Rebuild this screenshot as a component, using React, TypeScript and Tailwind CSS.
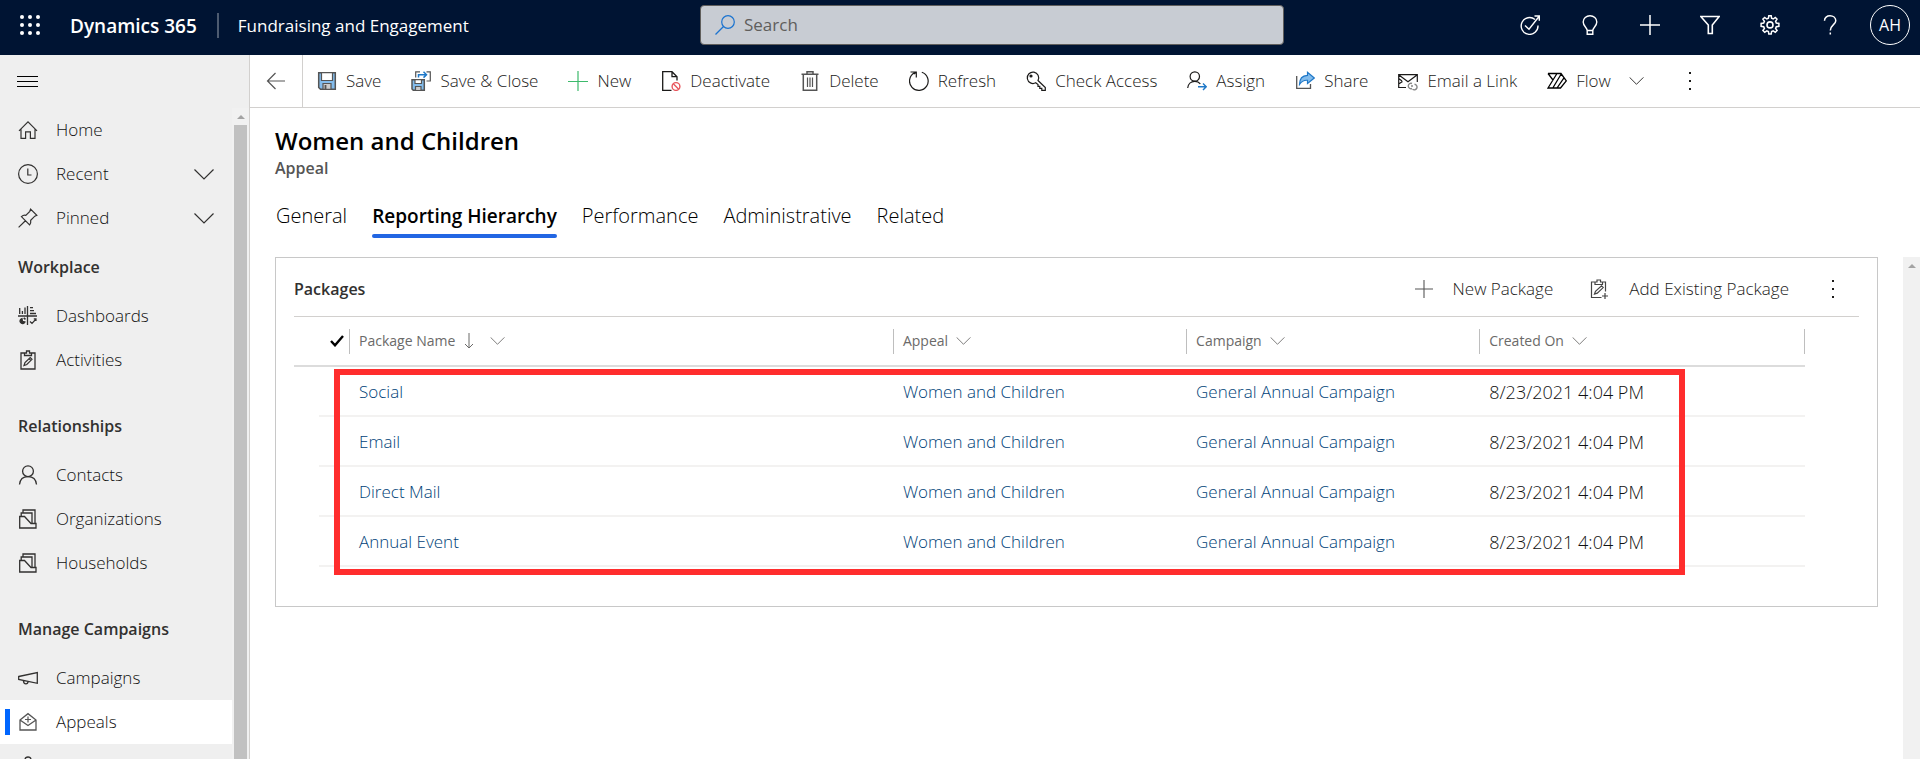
import type { ReactNode } from "react";

function Icon({ children, className = "h-5 w-5" }: { children: ReactNode; className?: string }) {
  return (
    <svg viewBox="0 0 20 20" fill="none" stroke="currentColor" strokeWidth="1.2" className={"shrink-0 " + className} aria-hidden="true">
      {children}
    </svg>
  );
}

function Chevron({ className }: { className: string }) {
  return (
    <svg viewBox="0 0 20 11" fill="none" stroke="currentColor" strokeWidth="1.2" className={"shrink-0 " + className} aria-hidden="true">
      <path d="M.5.5 10 10 19.5.5" />
    </svg>
  );
}

function Dots() {
  return (
    <svg viewBox="0 0 4 18" fill="currentColor" className="h-[18px] w-1" aria-hidden="true">
      <rect x="1" y="0" width="2" height="2" />
      <rect x="1" y="8" width="2" height="2" />
      <rect x="1" y="16" width="2" height="2" />
    </svg>
  );
}

const icons = {
  home: <Icon><path d="M3 9v9.4h4.600v-6.600h4.800v6.600H17V9M1 10.800 10 1.800l9 9" /></Icon>,
  recent: <Icon><circle cx="10" cy="10" r="9.400" /><path d="M9.800 4.500V11H13.500" /></Icon>,
  pinned: <Icon><path d="M12.600 1.200 18.800 7.400 16.800 8.200 12.700 12.300C13 14 12.700 15.400 11.600 16.800L3.400 8.600C4.700 7.400 6.200 7 7.800 7.300L11.800 3.300ZM7.400 12.700.600 19.400" /></Icon>,
  dashboards: (
    <Icon>
      <path d="M0 10h19M9.500 0v19" strokeWidth="1.300" />
      <path d="M1.700 2v6M4.400 5v3M7 1.500V8M12 1.700h3M12 4.700h4M12 7.500h6" strokeWidth="1.300" />
      <path d="M12 15.500 14 17.500 18 13M15.800 12.800H18V15" />
      <path d="M4 12.500A2.600 2.600 0 1 0 7 16L4.500 15.300Z" fill="currentColor" />
      <path d="M5.700 11.800 7.500 13.300" strokeWidth="1.500" />
    </Icon>
  ),
  activities: (
    <Icon>
      <path d="M6.500 3H3v16h14V3h-3.500M6.500 3v2.500h7V3H11.500V1h-3v2Z" strokeWidth="1.300" />
      <path d="M6 15.500 7 12.500 12.200 7.500 14 9.300 8.800 14.500ZM11 8.700 12.800 10.500" />
    </Icon>
  ),
  contacts: <Icon><circle cx="10" cy="6.200" r="5.400" strokeWidth="1.300" /><path d="M1.500 19.500C2 14.500 5.500 11.700 10 11.700S18 14.500 18.500 19.500" strokeWidth="1.300" /></Icon>,
  folder: (
    <Icon>
      <path d="M1.700 19V7.500H6.500L13 14.500H18V19ZM3.200 7V4H14V14M5 3.700V1H17V14" strokeWidth="1.300" />
    </Icon>
  ),
  campaigns: <Icon><path d="M.700 8.500 19.300 4.500V15.300L.700 11.500ZM5.500 12.500V13.500C6 16.800 10 16.500 10 13.500" strokeWidth="1.300" /></Icon>,
  appeals: (
    <Icon className="h-5 w-5 text-[#555]">
      <path d="M2 8 10 1.700 18 8V18H2ZM2 8 10 13.500 18 8" strokeWidth="1.300" />
      <path d="M10 4.500v6M7 7.500h6" />
    </Icon>
  ),
  packages: <Icon><path d="M10 1a3 3 0 0 1 3 3v2H7V4a3 3 0 0 1 3-3ZM3 6h14v13H3Z" strokeWidth="1.300" /></Icon>,
  back: <Icon className="h-5 w-5 text-[#555]"><path d="M9.500 2 1.500 10 9.500 18M1.500 10H19" /></Icon>,
  save: (
    <Icon>
      <path d="M1.700 1.700H18.300V18.300H3.500L1.700 16.500Z" fill="#83bcec" stroke="#555" strokeWidth="1.500" />
      <path d="M4.500 1.700H15.500V9.500H4.500Z" fill="#fff" stroke="#555" />
      <path d="M6 18.300V12.500H14V18.300Z" fill="#ccc" stroke="#555" />
      <path d="M8.500 14V18" stroke="#555" strokeWidth="1.800" />
    </Icon>
  ),
  saveClose: (
    <Icon>
      <path d="M1 8.700H13.300V19.300H2.300L1 18Z" fill="#83bcec" stroke="#555" strokeWidth="1.500" />
      <path d="M4 8.700H10.500V12.500H4Z" fill="#fff" stroke="#555" />
      <path d="M4.500 19V15.500H10V19" fill="#ccc" stroke="#555" />
      <path d="M4.700 6.500V.800H9M15.500.800H19.300V10H15.500" stroke="#555" />
      <path d="M7.500 6.500V3.700H15M12.500.800 15.500 3.700 12.500 6.600" stroke="#1f78c8" strokeWidth="1.500" />
    </Icon>
  ),
  add: <Icon className="h-5 w-5 text-[#3dba6c]"><path d="M10 0v20M0 10.500h20" /></Icon>,
  deactivate: (
    <Icon>
      <path d="M10.500 19.300H1.700V.700H11L16 5.700V9.500M11 .700V5.700H16" strokeWidth="1.300" />
      <g stroke="#e8555c" strokeWidth="1.400"><circle cx="15" cy="15.500" r="3.900" /><path d="M12.300 12.800 17.700 18.200" /></g>
    </Icon>
  ),
  trash: <Icon className="h-5 w-5 text-[#555]"><path d="M1.500 3.300H18.500M3.300 3.300V19.300H16.700V3.300M7 3V.700H13V3" strokeWidth="1.500" /><path d="M7.500 6.500V16M10 6.500V16M12.500 6.500V16" /></Icon>,
  refresh: <Icon><path d="M12.800 1.200A9.300 9.300 0 1 1 5.500 1.800M1.500 1H7.300V6.500M7 1.200 5 3" strokeWidth="1.200" /></Icon>,
  key: (
    <Icon>
      <path d="M12 9.500 19.300 16.500V19.300H15.800V17.300H13.800V15.300H12V13.500L9.700 11.800A5.700 5.700 0 1 1 12 9.500Z" strokeWidth="1.200" />
      <circle cx="5" cy="5" r="1" fill="currentColor" />
    </Icon>
  ),
  assign: (
    <Icon>
      <circle cx="7.800" cy="5.500" r="4.700" strokeWidth="1.200" />
      <path d="M.700 17C1 13 4 10.300 7.800 10.300 10 10.300 12 11.200 13.300 13" strokeWidth="1.200" />
      <path d="M11 15.700H19M16 12.500 19.200 15.700 16 18.900" stroke="#1f78c8" strokeWidth="1.400" />
    </Icon>
  ),
  share: (
    <Icon>
      <path d="M1.700 5V17.300H15.500V13" stroke="#555" strokeWidth="1.300" />
      <path d="M4.500 13.500C4.500 8 7.500 4.500 12.500 4.300V1.300L19.300 7 12.500 12.500V9.300C9 9 6.500 10.300 4.500 13.500Z" fill="#83bcec" stroke="#1f78c8" />
    </Icon>
  ),
  emailLink: (
    <Icon>
      <path d="M8 16.500H.700V3.700H19.300V11M.900 4 10 10.700 19 4M.700 7.500 4 10M.700 13 4.500 10.500" strokeWidth="1.200" />
      <g stroke="#888" strokeWidth="1.400"><path d="M14 17.500A2.700 2.700 0 1 1 14 12.500M13 15H15" /><path d="M14.500 18.300A2.800 2.800 0 1 0 16.500 13.300" /></g>
    </Icon>
  ),
  flow: (
    <Icon className="h-5 w-5 text-black">
      <path d="M1 2.500H14L19.300 9.800 13.500 17H1L10 2.500M1 2.500 6 9M14.200 3 5.800 17M17 6.800 10 17" strokeWidth="1.300" />
    </Icon>
  ),
  goal: <Icon><path d="M15 4.500A8.400 8.400 0 1 0 18 10.500M5 10.500 9 14.300 19 1.500M14.500 1H19.300V5.700" strokeWidth="1.400" /></Icon>,
  bulb: <Icon><path d="M7.200 19.200V15.500C7 12.500 3.200 11 3.200 7A6.800 6.300 0 0 1 16.800 7C16.800 11 13 12.500 12.800 15.500V19.200ZM7.200 15.500H12.800" strokeWidth="1.400" /></Icon>,
  plus: <Icon><path d="M10 0V20M0 10H20" strokeWidth="1.500" /></Icon>,
  funnel: <Icon><path d="M.800 1.500H19.200L12.300 10V18.500H8.300V10Z" strokeWidth="1.600" /></Icon>,
  gear: (
    <Icon>
      <path d="M8.400 3.300 8.800.800h2.400l.4 2.500 1.600.7 2.100-1.500 1.700 1.700L15.600 6.300l.700 1.700 2.600.4v2.900l-2.600.4-.7 1.700 1.500 2.100-1.800 1.800-2.100-1.500-1.600.7-.4 2.600H8.800l-.4-2.600-1.600-.7-2.100 1.500L2.900 15.500l1.500-2.100-.7-1.700-2.600-.4V8.400L3.700 8l.7-1.700L2.900 4.200 4.700 2.500l2.100 1.500Z" strokeWidth="1.500" />
      <circle cx="10" cy="9.900" r="3" strokeWidth="1.600" />
    </Icon>
  ),
  help: <Icon><path d="M4.500 5.700C4.500 2.500 7 .800 10 .800S15.800 2.700 15.800 5.800C15.800 9.500 10.300 10 10.300 15.500M10.300 17.500V19.500" strokeWidth="1.500" /></Icon>,
  search: <Icon><circle cx="13" cy="7" r="6.300" /><path d="M8.500 11.500.500 19.500" /></Icon>,
  clipboardAdd: (
    <Icon className="h-5 w-5 text-[#444]">
      <path d="M6 3H2.500V18.500H12.500M13.500 3H16.500V12.500M6 3V5.500H13.500V3H11.500V1H8V3Z" />
      <path d="M5.500 15 6.500 12.300 12.500 6.800 14.200 8.600 8.300 14.200ZM16 14V20M13 17H19" />
    </Icon>
  ),
};

type NavItem = { label: string; icon: ReactNode; expandable?: boolean; active?: boolean };
type NavGroup = { title?: string; items: NavItem[] };

const navGroups: NavGroup[] = [
  {
    items: [
      { label: "Home", icon: icons.home },
      { label: "Recent", icon: icons.recent, expandable: true },
      { label: "Pinned", icon: icons.pinned, expandable: true },
    ],
  },
  {
    title: "Workplace",
    items: [
      { label: "Dashboards", icon: icons.dashboards },
      { label: "Activities", icon: icons.activities },
    ],
  },
  {
    title: "Relationships",
    items: [
      { label: "Contacts", icon: icons.contacts },
      { label: "Organizations", icon: icons.folder },
      { label: "Households", icon: icons.folder },
    ],
  },
  {
    title: "Manage Campaigns",
    items: [
      { label: "Campaigns", icon: icons.campaigns },
      { label: "Appeals", icon: icons.appeals, active: true },
      { label: "Packages", icon: icons.packages },
    ],
  },
];

const commands = [
  { label: "Save", icon: icons.save },
  { label: "Save & Close", icon: icons.saveClose },
  { label: "New", icon: icons.add },
  { label: "Deactivate", icon: icons.deactivate },
  { label: "Delete", icon: icons.trash },
  { label: "Refresh", icon: icons.refresh },
  { label: "Check Access", icon: icons.key },
  { label: "Assign", icon: icons.assign },
  { label: "Share", icon: icons.share },
  { label: "Email a Link", icon: icons.emailLink },
];

const headerActions = [
  { label: "Assistant", icon: icons.goal },
  { label: "Tips", icon: icons.bulb },
  { label: "Quick create", icon: icons.plus },
  { label: "Advanced find", icon: icons.funnel },
  { label: "Settings", icon: icons.gear },
  { label: "Help", icon: icons.help },
];

const tabs = ["General", "Reporting Hierarchy", "Performance", "Administrative", "Related"];
const packages = ["Social", "Email", "Direct Mail", "Annual Event"];

function TopBar() {
  return (
    <header className="grid h-[55px] shrink-0 grid-cols-[700fr_584fr_636fr] items-center bg-[#001433] pb-[5px] text-white">
      <div className="flex items-center whitespace-nowrap pl-5">
        <button aria-label="App launcher" className="mr-[30px]">
          <svg viewBox="0 0 20 20" fill="currentColor" className="h-5 w-5" aria-hidden="true">
            {[2, 10, 18].map((y) => [2, 10, 18].map((x) => <circle key={x + "-" + y} cx={x} cy={y} r="2" />))}
          </svg>
        </button>
        <a href="#home" className="pt-0.5 text-[19px] font-semibold leading-6">Dynamics 365</a>
        <span className="ml-5 mr-[19px] h-[25px] w-0.5 bg-[#4d5b70]" />
        <span className="pt-0.5 text-[17px] leading-6">Fundraising and Engagement</span>
      </div>
      <label className="flex h-10 items-center gap-[9px] rounded-sm border border-[#605e5c] bg-[#c8ccd3] pl-3.5 text-[#1a73d0]">
        {icons.search}
        <input type="text" aria-label="Search" placeholder="Search" className="w-full bg-transparent text-[17px] text-[#444] outline-none placeholder:text-[#605e5c]" />
      </label>
      <div className="flex justify-end">
        {headerActions.map((a) => (
          <button key={a.label} aria-label={a.label} className="flex h-10 w-[60px] items-center justify-center">
            {a.icon}
          </button>
        ))}
        <button aria-label="Account" className="flex w-[60px] justify-center">
          <span className="flex h-10 w-10 items-center justify-center rounded-full border border-white text-base">AH</span>
        </button>
      </div>
    </header>
  );
}

function Sidebar() {
  return (
    <aside className="flex w-[250px] shrink-0 flex-col border-r border-[#d2d0ce] bg-[#efefef] text-[#323130]">
      <div className="flex h-[53px] shrink-0 items-center pl-[17px]">
        <button aria-label="Toggle navigation" className="flex flex-col gap-1 text-black">
          <span className="h-px w-[21px] bg-black" />
          <span className="h-px w-[21px] bg-black" />
          <span className="h-px w-[21px] bg-black" />
        </button>
      </div>
      <div className="flex min-h-0 flex-1">
        <nav className="flex min-w-0 flex-1 flex-col gap-[17px] overflow-hidden">
          {navGroups.map((group, i) => (
            <section key={i} className={i === 1 ? "-mt-[17px]" : ""}>
              {group.title && <h2 className="h-[54px] pl-[18px] text-base font-semibold leading-[54px]">{group.title}</h2>}
              <ul>
                {group.items.map((item) => (
                  <li key={item.label} className={item.active ? "bg-white" : ""}>
                    <a href={"#" + item.label.toLowerCase()} className="flex h-11 items-center pl-[5px] pr-[18px]">
                      <span className={item.active ? "mr-2 h-[26px] w-[5px] bg-[#0066ff]" : "mr-2 h-[26px] w-[5px]"} />
                      {item.icon}
                      <span className="ml-[18px] flex-1 text-[17px] font-light text-[#111]">{item.label}</span>
                      {item.expandable && <Chevron className="h-[11px] w-5" />}
                    </a>
                  </li>
                ))}
              </ul>
            </section>
          ))}
        </nav>
        <div className="flex w-[17px] shrink-0 flex-col items-center bg-[#f1f1f1]">
          <svg viewBox="0 0 8 4" className="mt-[7px] mb-1.5 h-1 w-2 shrink-0 fill-[#a3a3a3]" aria-hidden="true"><path d="M0 4 4 0 8 4Z" /></svg>
          <span className="w-[13px] flex-1 bg-[#c1c1c1]" />
        </div>
      </div>
    </aside>
  );
}

function CommandBar() {
  return (
    <div className="flex h-[53px] shrink-0 items-center whitespace-nowrap border-b border-[#d2d0ce] text-[17px] font-light text-[#1b1a19]">
      <button aria-label="Back" className="flex h-full w-[53px] items-center justify-center border-r border-[#d2d0ce]">{icons.back}</button>
      <div className="flex items-center gap-[30px] pl-3.5">
        {commands.map((c) => (
          <button key={c.label} className="flex items-center gap-[9px]">
            {c.icon}
            {c.label}
          </button>
        ))}
        <button className="flex items-center gap-[9px]">
          {icons.flow}
          Flow
          <Chevron className="ml-[9px] h-2 w-[15px]" />
        </button>
        <button aria-label="More commands" className="ml-3.5"><Dots /></button>
      </div>
    </div>
  );
}

function ColumnHead({ label, sorted, last }: { label: string; sorted?: boolean; last?: boolean }) {
  return (
    <th scope="col" className="h-[50px] border-b-2 border-[#dcdcdc] p-0 font-normal">
      <div className={last ? "flex h-[25px] items-center border-x border-[#bebebe] pl-[9px]" : "flex h-[25px] items-center border-l border-[#bebebe] pl-[9px]"}>
        {label}
        {sorted && (
          <svg viewBox="0 0 10 16" fill="none" stroke="currentColor" className="ml-[9px] mr-2 h-4 w-2.5" aria-hidden="true"><path d="M5 0V15M1 11 5 15 9 11" /></svg>
        )}
        <Chevron className="ml-2 h-2 w-[15px]" />
      </div>
    </th>
  );
}

function PackagesPanel() {
  return (
    <section className="min-w-0 flex-1 self-start border border-[#c8c8c8] px-[18px] pb-[39px]">
      <div className="flex h-[59px] items-center whitespace-nowrap border-b border-[#d2d0ce] pt-1 text-[17px] text-[#1b1a19]">
        <h2 className="flex-1 text-base font-semibold text-[#323130]">Packages</h2>
        <button className="mr-9 flex items-center gap-5 font-light">
          <Icon className="h-[18px] w-[18px] text-[#555]"><path d="M10 0V20M0 10H20" /></Icon>
          New Package
        </button>
        <button className="mr-[42px] flex items-center gap-5 font-light">
          {icons.clipboardAdd}
          Add Existing Package
        </button>
        <button aria-label="More actions" className="mr-6"><Dots /></button>
      </div>
      <div className="relative mr-[54px]">
        <table className="w-full table-fixed border-separate border-spacing-0 text-left">
          <colgroup>
            <col className="w-[25px]" />
            <col className="w-[30px]" />
            <col className="w-[36%]" />
            <col className="w-[19.4%]" />
            <col className="w-[19.4%]" />
            <col />
          </colgroup>
          <thead className="text-sm text-[#6b6a69]">
            <tr>
              <th className="w-[25px] border-b-2 border-[#dcdcdc] p-0" />
              <th className="w-[30px] border-b-2 border-[#dcdcdc] p-0 pl-[11px]">
                <button aria-label="Select all" className="block text-black">
                  <svg viewBox="0 0 14 12" fill="none" stroke="currentColor" strokeWidth="2.400" className="h-3 w-3.5" aria-hidden="true"><path d="M1 6 5 10.300 13 1" /></svg>
                </button>
              </th>
              <ColumnHead label="Package Name" sorted />
              <ColumnHead label="Appeal" />
              <ColumnHead label="Campaign" />
              <ColumnHead label="Created On" last />
            </tr>
          </thead>
          <tbody className="text-[17px] font-light text-[#003f78]">
            {packages.map((name) => (
              <tr key={name} className="h-[50px]">
                <td className="p-0" />
                <td className="border-b-2 border-[#f3f2f1] p-0" />
                <td className="border-b-2 border-[#f3f2f1] p-0 pl-2.5 pt-0.5"><a href="#package">{name}</a></td>
                <td className="border-b-2 border-[#f3f2f1] p-0 pl-2.5 pt-0.5"><a href="#appeal">Women and Children</a></td>
                <td className="border-b-2 border-[#f3f2f1] p-0 pl-2.5 pt-0.5"><a href="#campaign">General Annual Campaign</a></td>
                <td className="border-b-2 border-[#f3f2f1] p-0 pl-2.5 pt-0.5 text-lg font-light text-[#111]">8/23/2021 4:04 PM</td>
              </tr>
            ))}
          </tbody>
        </table>
        <div className="pointer-events-none absolute -bottom-2 left-10 right-[120px] top-[52px] border-[6px] border-[#ff2d2d]" />
      </div>
    </section>
  );
}

export default function App() {
  return (
    <div className="flex h-screen flex-col overflow-hidden bg-white font-['Open_Sans',sans-serif]">
      <TopBar />
      <div className="flex min-h-0 flex-1">
        <Sidebar />
        <main className="flex min-w-0 flex-1 flex-col">
          <CommandBar />
          <div className="px-[25px] pt-[17px]">
            <h1 className="text-2xl font-semibold leading-8 text-black">Women and Children</h1>
            <p className="text-base font-semibold leading-[22px] text-[#555]">Appeal</p>
          </div>
          <div role="tablist" className="mb-[19px] mt-[23px] flex gap-[25px] whitespace-nowrap px-[26px] text-black">
            {tabs.map((t) => {
              const active = t === "Reporting Hierarchy";
              return (
                <button
                  key={t}
                  role="tab"
                  aria-selected={active}
                  className={active ? "flex flex-col gap-1 text-[19px] font-semibold leading-7" : "flex flex-col gap-1 text-xl font-light leading-7"}
                >
                  {t}
                  <span className={active ? "h-1 w-full rounded-sm bg-[#2266e3]" : "h-1 w-full"} />
                </button>
              );
            })}
          </div>
          <div className="flex min-h-0 flex-1 gap-[25px] pl-[25px]">
            <PackagesPanel />
            <div className="flex w-[17px] shrink-0 justify-center bg-[#f1f1f1] pt-[7px]">
              <svg viewBox="0 0 8 4" className="h-1 w-2 fill-[#a3a3a3]" aria-hidden="true"><path d="M0 4 4 0 8 4Z" /></svg>
            </div>
          </div>
        </main>
      </div>
    </div>
  );
}
